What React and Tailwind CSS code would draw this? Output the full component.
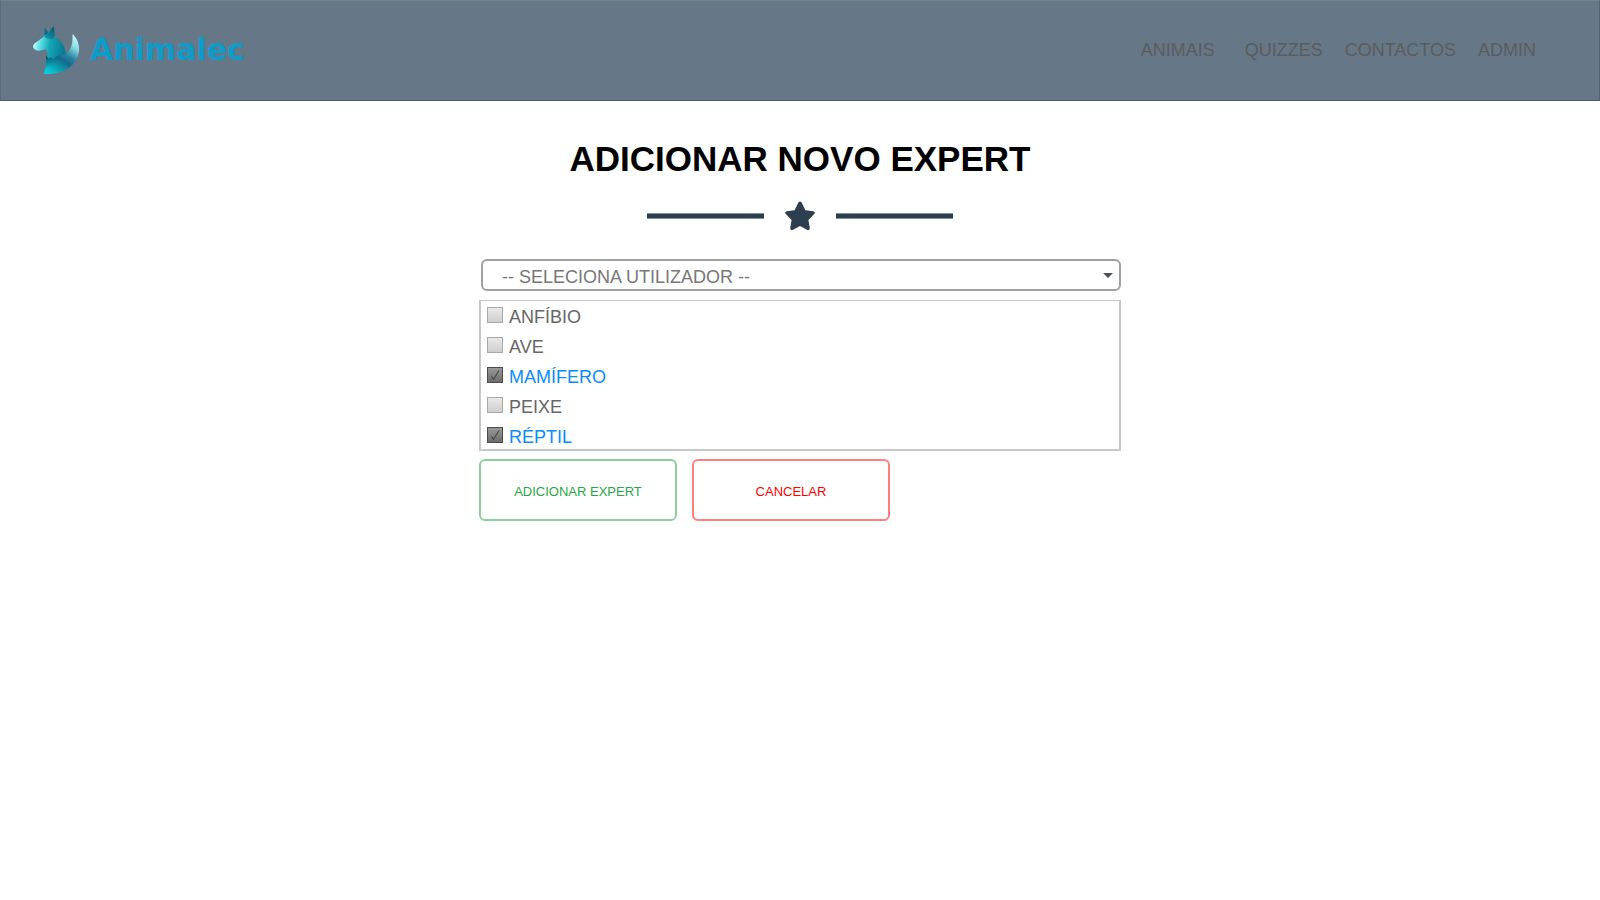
import { useState } from "react";

const links = [
  { label: "ANIMAIS", className: "mr-[30px]" },
  { label: "QUIZZES", className: "mr-[22px]" },
  { label: "CONTACTOS", className: "mr-[22px]" },
  { label: "ADMIN", className: "" },
];

const groups = ["ANFÍBIO", "AVE", "MAMÍFERO", "PEIXE", "RÉPTIL"];

function FoxLogo() {
  return (
    <svg viewBox="0 0 47 49" className="h-[49px] w-[47px]" aria-hidden="true">
      <defs>
        <linearGradient id="head" gradientUnits="userSpaceOnUse" x1="1" y1="20" x2="31" y2="25">
          <stop offset="0" stopColor="#b4fbf8" />
          <stop offset="0.22" stopColor="#55dbe2" />
          <stop offset="0.5" stopColor="#14a6b6" />
          <stop offset="1" stopColor="#087b90" />
        </linearGradient>
        <linearGradient id="ear" x1="0.8" y1="0" x2="0.2" y2="1">
          <stop offset="0" stopColor="#075571" />
          <stop offset="1" stopColor="#0e9cae" />
        </linearGradient>
        <linearGradient id="tail" gradientUnits="userSpaceOnUse" x1="42" y1="9" x2="16" y2="47">
          <stop offset="0" stopColor="#c4ffff" />
          <stop offset="0.22" stopColor="#8adbe2" />
          <stop offset="0.45" stopColor="#2b84a3" />
          <stop offset="0.6" stopColor="#126b8c" />
          <stop offset="0.78" stopColor="#0d99ae" />
          <stop offset="1" stopColor="#05ccda" />
        </linearGradient>
        <linearGradient id="shade" gradientUnits="userSpaceOnUse" x1="13" y1="30" x2="18" y2="42">
          <stop offset="0" stopColor="#084460" />
          <stop offset="1" stopColor="#0b8ba2" stopOpacity="0" />
        </linearGradient>
      </defs>
      <path d="M11 10 L12 2 Q15 5 16 9 Z" fill="#08718a" />
      <path d="M0 20 C1 16 7 15 11 10 C14 8 18 8 21 11 C28 13 32 20 33 29 L30 35 L14 36 C15 30 15 26 12.5 23 C8 25 2 26 0 21 Z" fill="url(#head)" />
      <path d="M11 11 Q16 7 20.5 0 Q22.5 6 21 13 Q16 14 11 11 Z" fill="url(#ear)" />
      <path d="M39.5 8 C44.5 12 47.5 21 45.5 28 C42 41 29 49 10.5 48 C13 42 13.5 36 13 29.5 L16 33 L17.5 31 L20 33 C22 30 27 29 32 28 C38 25 40 18 39.5 8 Z" fill="url(#tail)" />
      <path d="M13 29.5 L16 33 L17.5 31 L20 33 L26 31 L20 41 L12 43 Q14 36 13 29.5 Z" fill="url(#shade)" />
    </svg>
  );
}

function Header() {
  return (
    <header className="flex h-[101px] items-center justify-between border border-t-[#708488] border-r-[#536377] border-b-[#4c5b6f] border-l-[#5c6c80] bg-[#667788] pr-[63px] pl-8">
      <a href="#inicio" className="flex items-center gap-2.5 text-[#0f9bc8]">
        <FoxLogo />
        <span className="pb-0.5 font-['DejaVu_Sans',sans-serif] text-[30px] leading-9 font-bold">Animalec</span>
      </a>
      <nav className="flex pb-0.5 text-lg text-[#5c5c5c]">
        {links.map((link) => (
          <a key={link.label} href={"#" + link.label.toLowerCase()} className={link.className}>
            {link.label}
          </a>
        ))}
      </nav>
    </header>
  );
}

function Divider() {
  return (
    <div className="flex items-center justify-center gap-5">
      <span className="h-1.5 w-[117px] border-y border-[#8390a0] bg-[#2c3e50]" />
      <svg viewBox="0 0 32 30" className="h-[30px] w-8" fill="#2c3e50" aria-hidden="true">
        <path d="M14.2 1.8 Q16 -0.8 17.8 1.8 L21.4 9.2 L29.3 10.3 Q31.8 11 30.2 13.1 L24.4 18.9 L25.8 27.1 Q25.8 29.8 23.4 29 L16 25.1 L8.6 29 Q6.2 29.8 6.2 27.1 L7.6 18.9 L1.8 13.1 Q0.2 11 2.7 10.3 L10.6 9.2 Z" />
      </svg>
      <span className="h-1.5 w-[117px] border-y border-[#8390a0] bg-[#2c3e50]" />
    </div>
  );
}

function GroupOption({ label, checked, onToggle }) {
  return (
    <label className={"flex h-[30px] items-center gap-1.5 pb-0.5 " + (checked ? "text-[#0a8bff]" : "text-[#666666]")}>
      <span className="relative flex size-4">
        <input
          type="checkbox"
          checked={checked}
          onChange={onToggle}
          className="size-4 appearance-none border border-[#a8a8a8] bg-linear-to-b from-[#e9e9e9] to-[#cfcfcf] checked:border-[#4c4c4c] checked:from-[#999999] checked:to-[#6c6c6c]"
        />
        {checked && (
          <svg viewBox="0 0 16 16" className="pointer-events-none absolute inset-0" fill="none" stroke="#484848" strokeWidth="1.2" aria-hidden="true">
            <path d="M4.5 9.5 L6.5 12.5 L12 3.5" />
          </svg>
        )}
      </span>
      <span className="pt-1">{label}</span>
    </label>
  );
}

export default function App() {
  const [selected, setSelected] = useState(["MAMÍFERO", "RÉPTIL"]);
  const toggle = (group) =>
    setSelected((current) =>
      current.includes(group) ? current.filter((item) => item !== group) : [...current, group]
    );

  return (
    <div className="min-h-screen bg-white font-['Liberation_Sans',Arial,sans-serif]">
      <Header />
      <main className="mx-auto max-w-[642px] pt-9">
        <h1 className="mb-5 text-center text-[35px] leading-[44px] font-bold text-black">ADICIONAR NOVO EXPERT</h1>
        <Divider />
        <form className="mt-7" onSubmit={(event) => event.preventDefault()}>
          <div className="relative ml-0.5">
            <select
              aria-label="Utilizador"
              defaultValue=""
              className="block h-8 w-full appearance-none rounded-md border-2 border-[#a0a0a0] bg-white pt-1 pl-[19px] text-lg leading-6 text-[#777777]"
            >
              <option value="">-- SELECIONA UTILIZADOR --</option>
            </select>
            <svg viewBox="0 0 10 5" className="pointer-events-none absolute top-3.5 right-2 h-[5px] w-2.5" fill="#495057" aria-hidden="true">
              <path d="M0 0 H10 L5 5 Z" />
            </svg>
          </div>
          <fieldset className="mt-[9px] h-[151px] border-2 border-t border-[#c8c8c8] pl-1.5 text-lg leading-6">
            {groups.map((group) => (
              <GroupOption key={group} label={group} checked={selected.includes(group)} onToggle={() => toggle(group)} />
            ))}
          </fieldset>
          <div className="mt-2 flex gap-[15px] text-[13px]">
            <button type="submit" className="h-[62px] w-[198px] rounded-md border-2 border-[#8dd09c] pt-1 text-[#28a745]">
              ADICIONAR EXPERT
            </button>
            <button type="button" className="h-[62px] w-[198px] rounded-md border-2 border-[#ff7f7f] pt-1 text-[#ff0000]">
              CANCELAR
            </button>
          </div>
        </form>
      </main>
    </div>
  );
}
